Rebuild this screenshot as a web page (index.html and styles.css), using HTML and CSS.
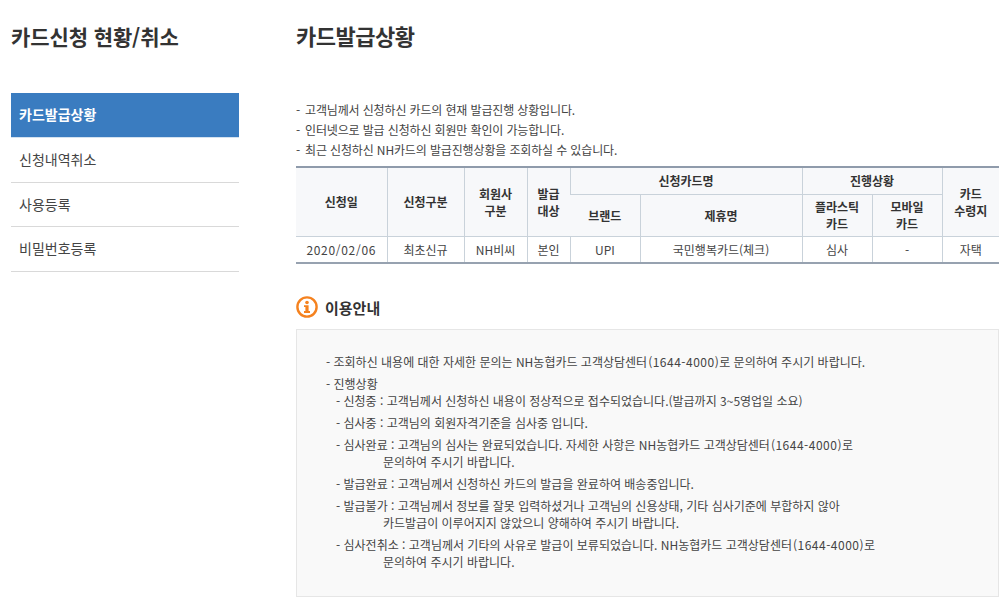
FILE: index.html
```html
<!DOCTYPE html>
<html lang="ko">
<head>
    <meta charset="utf-8">
    <title>카드신청 현황/취소</title>
    <link rel="stylesheet" href="styles.css">
</head>
<body>
    <div class="wrap">
        <div class="side">
            <h2>카드신청 현황/취소</h2>
            <ul class="menu">
                <li class="on">카드발급상황</li>
                <li>신청내역취소</li>
                <li>사용등록</li>
                <li>비밀번호등록</li>
            </ul>
        </div>
        <div class="content">
            <h1>카드발급상황</h1>
            <ul class="notice">
                <li>고객님께서 신청하신 카드의 현재 발급진행 상황입니다.</li>
                <li>인터넷으로 발급 신청하신 회원만 확인이 가능합니다.</li>
                <li>최근 신청하신 NH카드의 발급진행상황을 조회하실 수 있습니다.</li>
            </ul>
            <table class="list">
                <colgroup>
                    <col class="c1"><col class="c2"><col class="c3"><col class="c4"><col class="c5">
                    <col class="c6"><col class="c7"><col class="c8"><col class="c9">
                </colgroup>
                <thead>
                    <tr class="r1">
                        <th rowspan="2">신청일</th>
                        <th rowspan="2">신청구분</th>
                        <th rowspan="2">회원사<br>구분</th>
                        <th rowspan="2">발급<br>대상</th>
                        <th colspan="2">신청카드명</th>
                        <th colspan="2">진행상황</th>
                        <th rowspan="2">카드<br>수령지</th>
                    </tr>
                    <tr class="r2">
                        <th>브랜드</th>
                        <th>제휴명</th>
                        <th>플라스틱<br>카드</th>
                        <th>모바일<br>카드</th>
                    </tr>
                </thead>
                <tbody>
                    <tr>
                        <td class="date">2020/02/06</td>
                        <td>최초신규</td>
                        <td>NH비씨</td>
                        <td>본인</td>
                        <td>UPI</td>
                        <td>국민행복카드(체크)</td>
                        <td>심사</td>
                        <td>-</td>
                        <td>자택</td>
                    </tr>
                </tbody>
            </table>
            <h3 class="guide-title">
                <svg class="ico" width="22" height="22" viewBox="0 0 22 22">
                    <circle cx="11" cy="11" r="9.6" fill="none" stroke="#f5821f" stroke-width="2.4"/>
                    <circle cx="11" cy="6.5" r="1.8" fill="#f5821f"/>
                    <path d="M8 9.2h4.6v5.9h1.4v1.9H8v-1.9h1.4v-4H8z" fill="#f5821f"/>
                </svg>
                이용안내
            </h3>
            <div class="guide">
                <p class="lead">- 조회하신 내용에 대한 자세한 문의는 NH농협카드 고객상담센터<span class="tel">(1644-4000)</span>로 문의하여 주시기 바랍니다.</p>
                <p class="head">- 진행상황</p>
                <dl class="state">
                    <dd>- 신청중 : 고객님께서 신청하신 내용이 정상적으로 접수되었습니다.(발급까지 3~5영업일 소요)</dd>
                    <dd>- 심사중 : 고객님의 회원자격기준을 심사중 입니다.</dd>
                    <dd>- 심사완료 : 고객님의 심사는 완료되었습니다. 자세한 사항은 NH농협카드 고객상담센터<span class="tel">(1644-4000)</span>로<span class="more">문의하여 주시기 바랍니다.</span></dd>
                    <dd>- 발급완료 : 고객님께서 신청하신 카드의 발급을 완료하여 배송중입니다.</dd>
                    <dd>- 발급불가 : 고객님께서 정보를 잘못 입력하셨거나 고객님의 신용상태, 기타 심사기준에 부합하지 않아<span class="more">카드발급이 이루어지지 않았으니 양해하여 주시기 바랍니다.</span></dd>
                    <dd>- 심사전취소 : 고객님께서 기타의 사유로 발급이 보류되었습니다. NH농협카드 고객상담센터<span class="tel">(1644-4000)</span>로<span class="more">문의하여 주시기 바랍니다.</span></dd>
                </dl>
            </div>
        </div>
    </div>
</body>
</html>
```

FILE: styles.css
```css
* {
    margin: 0;
    padding: 0;
    box-sizing: border-box;
}

body {
    background: #fff;
    color: #444;
    font-family: "Noto Sans CJK KR", "Noto Sans", sans-serif;
    font-size: 12px;
}

ul {
    list-style: none;
}

.wrap {
    display: flex;
    padding: 0 6px 17px 11px;
}

.side {
    width: 228px;
    margin-right: 57px;
}

.side h2 {
    margin: 19px 0 38px;
    height: 36px;
    line-height: 34px;
    font-size: 21px;
    font-weight: 700;
    letter-spacing: -0.1px;
    color: #333;
}

.menu li {
    height: 44.5px;
    line-height: 42px;
    padding-left: 8px;
    font-size: 14px;
    color: #444;
    border-bottom: 1px solid #d9d9d9;
}

.menu li.on {
    height: 45px;
    background: #3a7cc0;
    border-bottom: 1px solid #d4e2f0;
    color: #fff;
    font-weight: 700;
}

.content {
    width: 703px;
}

.content h1 {
    margin-top: 19px;
    height: 32px;
    line-height: 32px;
    font-size: 22px;
    font-weight: 700;
    letter-spacing: -0.5px;
    color: #333;
}

.notice {
    margin: 49px 0 6px;
}

.notice li {
    height: 20px;
    line-height: 19px;
    padding-left: 9px;
    letter-spacing: -0.14px;
    position: relative;
}

.notice li::before {
    content: "-";
    position: absolute;
    left: 0;
}

.list {
    width: 703px;
    border-collapse: collapse;
    table-layout: fixed;
    border-top: 2px solid #8f9bab;
    border-bottom: 2px solid #97a2b0;
    text-align: center;
}

.c1 { width: 91px; }
.c2 { width: 77px; }
.c3 { width: 63px; }
.c4 { width: 43px; }
.c5 { width: 70px; }
.c6 { width: 162px; }
.c7 { width: 70px; }
.c8 { width: 70px; }
.c9 { width: 57px; }

.list th,
.list td {
    border-left: 1px solid #c9d2da;
    border-bottom: 1px solid #c9d2da;
    color: #333;
    line-height: 17px;
}

.list th {
    background: #f7f8fa;
    font-weight: 700;
}

.list th:first-child,
.list td:first-child {
    border-left: 0;
}

.list .r1 th {
    height: 27px;
}

.list .r2 th {
    height: 42px;
}

.list td {
    height: 27px;
    border-bottom: 0;
    color: #444;
}

.list td.date {
    letter-spacing: 0.7px;
}

.guide-title {
    display: flex;
    align-items: center;
    gap: 7px;
    margin-top: 32px;
    height: 22px;
    font-size: 15px;
    font-weight: 700;
    color: #333;
}

.guide {
    margin-top: 11px;
    height: 268px;
    padding: 23px 29px;
    background: #f9f9f9;
    border: 1px solid #e6e6e6;
}

.guide .lead {
    line-height: 17px;
    margin-bottom: 5px;
}

.guide .head {
    line-height: 17px;
}

.state {
    padding-left: 10px;
}

.state dd {
    line-height: 17px;
    margin-bottom: 5px;
}

.tel {
    margin-left: 1px;
    letter-spacing: 0.5px;
}

.more {
    display: block;
    padding-left: 47px;
}
```
